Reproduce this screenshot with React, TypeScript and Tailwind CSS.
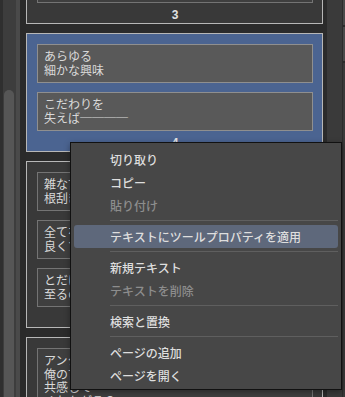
import React from "react";

type PageProps = {
  selected?: boolean;
  boxes: string[][];
  num: string;
};

function Page({ selected, boxes, num }: PageProps) {
  return (
    <div
      className={
        "shrink-0 border border-[#b7b7b7] pt-[10px] pl-[10px] pr-[9px] flex flex-col " +
        (selected ? "bg-[#4b6491]" : "bg-[#393939]")
      }
    >
      <div className="flex flex-col gap-[9px]">
        {boxes.map((lines, i) => (
          <div
            key={i}
            className={
              "min-h-[39px] border px-[6px] pt-[4px] pb-[4px] text-[12px] leading-[13.5px] text-[#d9d9d9] " +
              (selected ? "bg-[#595959] border-[#8f8f8f]" : "bg-[#3f3f3f] border-[#747474]")
            }
          >
            {lines.map((l, j) => (
              <div key={j} className="whitespace-nowrap">
                {l}
              </div>
            ))}
          </div>
        ))}
      </div>
      <div className="h-[20px] flex items-end justify-center pb-[1px] text-[12px] leading-[14px] font-bold text-[#e2e2e2] font-['Liberation_Sans',sans-serif]">
        {num}
      </div>
    </div>
  );
}

function Item({ label, disabled, active }: { label: string; disabled?: boolean; active?: boolean }) {
  return (
    <div
      className={
        "h-[23px] mx-[3px] pl-[36px] flex items-center text-[12px] font-medium whitespace-nowrap rounded-[3px] " +
        (disabled ? "text-[#8d8d8d] " : "text-[#dedede] ") +
        (active ? "bg-[#5e687b]" : "")
      }
    >
      {label}
    </div>
  );
}

function Sep() {
  return (
    <div className="h-[8px] pt-[3px] pl-[39px] pr-[3px]">
      <div className="h-px bg-[#5f5f5f]" />
    </div>
  );
}

export default function App() {
  return (
    <div className="relative w-[345px] h-[397px] overflow-hidden bg-[#2b2b2b] flex font-['Noto_Sans_CJK_JP',sans-serif]">
      {/* left scrollbar area */}
      <div className="w-[26px] h-full flex shrink-0">
        <div className="w-[3px] h-full bg-[#2f2f2f]" />
        <div className="w-[13px] h-full bg-[#3d3d3d] pt-[90px] pl-[1px]">
          <div className="w-[10px] h-full rounded-t-full bg-[#565656]" />
        </div>
        <div className="w-[4px] h-full bg-[#4a4a4a]" />
        <div className="w-[6px] h-full bg-[#2a2a2a]" />
      </div>

      {/* pages column */}
      <div className="w-[297px] shrink-0 flex flex-col gap-[9px] mt-[-47px]">
        <Page boxes={[["", ""]]} num="3" />
        <Page
          selected
          boxes={[
            ["あらゆる", "細かな興味"],
            ["こだわりを", "失えば────"],
          ]}
          num="4"
        />
        <Page
          boxes={[
            ["雑な言葉で", "根刮ぎ"],
            ["全てを", "良くする"],
            ["とだけ", "至るのだ"],
          ]}
          num="5"
        />
        <Page
          boxes={[["アンタは", "俺の言葉に", "共感して", "くれたがろ？"]]}
          num="6"
        />
      </div>

      {/* right area */}
      <div className="flex-1 h-full flex">
        <div className="w-[4px] h-full bg-[#2b2b2b]" />
        <div className="w-[15px] h-full bg-[#3a3a3a]" />
        <div className="w-[1px] h-full bg-[#2c2c2c]" />
        <div className="flex-1 h-full flex flex-col gap-[2px]">
          <div className="h-[25px] bg-[#4a4a4a]" />
          <div className="h-[34px] bg-[#4a4a4a]" />
          <div className="flex-1 bg-[#3a3a3a]" />
        </div>
      </div>

      {/* context menu */}
      <div className="absolute left-[70px] top-[142px] w-[272px] h-[248px] border border-[#111111] bg-[#474747] pt-[5px] pb-[2px] shadow-[0_2px_6px_rgba(0,0,0,0.35)]">
        <Item label="切り取り" />
        <Item label="コピー" />
        <Item label="貼り付け" disabled />
        <Sep />
        <Item label="テキストにツールプロパティを適用" active />
        <Sep />
        <Item label="新規テキスト" />
        <Item label="テキストを削除" disabled />
        <Sep />
        <Item label="検索と置換" />
        <Sep />
        <Item label="ページの追加" />
        <Item label="ページを開く" />
      </div>
    </div>
  );
}
